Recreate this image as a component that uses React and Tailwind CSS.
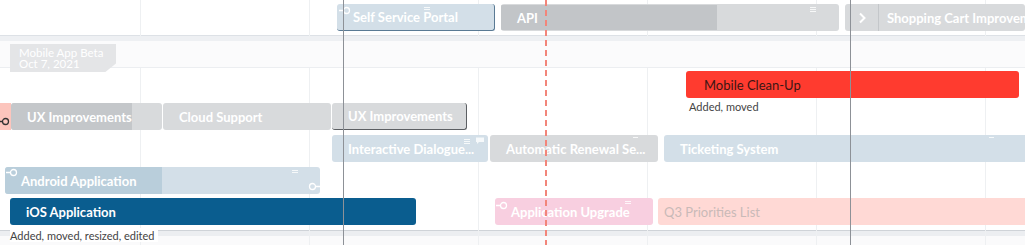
import React from "react";

const font = { fontFamily: "Lato, 'Open Sans', sans-serif" };

function Connector({ className = "", flip = false }) {
  return (
    <svg
      width="12"
      height="9"
      viewBox="0 0 12 9"
      className={`absolute ${className}`}
      style={flip ? { transform: "scaleX(-1)" } : undefined}
    >
      <line x1="0" y1="4.5" x2="4" y2="4.5" stroke="currentColor" strokeWidth="1.3" />
      <circle cx="7.5" cy="4.5" r="3" fill="none" stroke="currentColor" strokeWidth="1.3" />
    </svg>
  );
}

function Grip({ className = "", lines = 3 }) {
  return (
    <div className={`absolute flex flex-col gap-[1px] ${className}`}>
      {Array.from({ length: lines }).map((_, i) => (
        <span key={i} className="block w-[6px] h-px bg-white/80" />
      ))}
    </div>
  );
}

function Bar({ className = "", children, textClass = "text-white font-bold", pad = "pl-4" }) {
  return (
    <div
      className={`relative shrink-0 h-[27px] rounded-[3px] flex items-center pt-[2px] overflow-hidden whitespace-nowrap text-[13px] ${pad} ${textClass} ${className}`}
    >
      {children}
    </div>
  );
}

function Row({ className = "", children }) {
  return <div className={`relative flex h-[27px] ${className}`}>{children}</div>;
}

export default function App() {
  const grid = [140, 309, 478, 647, 816, 985];
  return (
    <div className="relative w-[1025px] h-[245px] overflow-hidden bg-white" style={font}>
      {/* light grid */}
      {grid.map((x) => (
        <div key={x} className="absolute top-0 bottom-0 w-px bg-[#eef0f2]" style={{ left: x }} />
      ))}

      {/* top lane */}
      <div className="relative h-[35px] pt-[4px]">
        <Row className="pl-[337px] gap-[6px]">
          <Bar className="w-[158px] bg-[#d3dfe8] border-r border-b border-[#5a7a94]">
            <Connector className="left-[2px] top-[2px] text-white" />
            Self Service Portal
            <Grip lines={2} className="right-[64px] top-[3px]" />
          </Bar>
          <Bar pad="pl-0" className="w-[338px] bg-[#d8dadc]">
            <div className="h-full w-[216px] -mt-[2px] bg-[#c2c5c8] flex items-center pt-[2px] pl-4">API</div>
            <Grip className="right-[23px] top-[3px]" />
          </Bar>
          <Bar pad="pl-0" className="w-[180px] bg-[#d8dadc]">
            <div className="h-[27px] -mt-[2px] w-[34px] shrink-0 border-r border-[#c4c7ca] flex items-center justify-center">
              <svg width="8" height="12" viewBox="0 0 8 12">
                <path d="M2 1.5 L6.5 6 L2 10.5" fill="none" stroke="white" strokeWidth="2" />
              </svg>
            </div>
            <span className="pl-2">Shopping Cart Improvem</span>
          </Bar>
        </Row>
      </div>
      <div className="h-px bg-[#dde1e6]" />
      <div className="h-[5px] bg-[#eef0f3]" />

      {/* milestone lane */}
      <div className="relative z-10 h-[27px] bg-[#fbfbfc] border-b border-[#eceef1] pt-[3px] pl-[10px]">
        <div
          className="w-[106px] h-[28px] bg-[#e4e5e7] text-white text-[11.5px] leading-[11px] pl-[9px] pt-[3px]"
          style={{ clipPath: "polygon(0 0, 100% 0, 100% 70%, 90% 100%, 0 100%)" }}
        >
          <div>Mobile App Beta</div>
          <div>Oct 7, 2021</div>
        </div>
      </div>

      {/* main lane */}
      <div className="relative h-[162px] pt-[3px] flex flex-col gap-[5px]">
        <Row className="pl-[686px]">
          <Bar pad="pl-[18px]" textClass="text-[#3b1614] font-normal" className="w-[333px] bg-[#ff3b2f]">
            Mobile Clean-Up
          </Bar>
          <div className="absolute left-[689px] top-[29px] text-[11px] leading-[13px] text-[#444]">Added, moved</div>
        </Row>

        <Row>
          <div className="w-[11px] shrink-0 bg-[#fcc5bd]" />
          <Connector className="left-[-2px] top-[14px] text-[#333]" />
          <Bar pad="pl-0" className="w-[151px] bg-[#d8dadc]">
            <div className="h-[27px] -mt-[2px] w-[121px] bg-[#c4c7ca] flex items-center pt-[2px] pl-4">UX Improvements</div>
          </Bar>
          <Bar className="ml-px w-[168px] bg-[#d8dadc]">Cloud Support</Bar>
          <Bar className="ml-px w-[135px] bg-[#d8dadc] border-r border-b border-[#5c5f63]">UX Improvements</Bar>
        </Row>

        <Row className="pl-[332px]">
          <Bar className="w-[156px] bg-[#d3dfe8]">
            Interactive Dialogue...
            <Grip className="right-[18px] top-[4px]" />
            <svg width="10" height="9" viewBox="0 0 10 9" className="absolute right-[3px] top-[1px]">
              <path d="M1 1.5h8v4.5H4L2 8V6H1z" fill="white" fillOpacity="0.8" />
            </svg>
          </Bar>
          <Bar className="ml-[2px] w-[168px] bg-[#d8dadc]">
            Automatic Renewal Se...
            <span className="absolute right-[20px] top-[2px] w-[5px] h-px bg-white/80" />
          </Bar>
          <Bar className="ml-[6px] w-[370px] bg-[#d3dfe8]">
            Ticketing System
            <span className="absolute left-[325px] top-[2px] w-[5px] h-px bg-white/80" />
          </Bar>
        </Row>

        <Row className="pl-[5px]">
          <Bar pad="pl-0" className="w-[315px] bg-[#d3dfe8]">
            <div className="h-[27px] -mt-[2px] w-[157px] bg-[#b9cedb] flex items-center pt-[2px] pl-4">Android Application</div>
            <Connector className="left-[1px] top-[1px] text-white" />
            <Connector flip className="right-0 top-[15px] text-white" />
            <Grip lines={2} className="right-[22px] top-[3px]" />
          </Bar>
        </Row>

        <Row className="pl-[10px] -mt-px">
          <Bar className="w-[406px] bg-[#0a5d8f]">iOS Application</Bar>
          <Bar className="ml-[79px] w-[158px] bg-[#f8cfe0]">
            <Connector className="left-[1px] top-[3px] text-white" />
            Application Upgrade
            <Grip lines={2} className="right-[22px] top-[3px]" />
          </Bar>
          <Bar pad="pl-[6px]" textClass="text-[#c9bab8] font-normal" className="ml-[5px] w-[380px] bg-[#ffd9d5]">
            Q3 Priorities List
          </Bar>
        </Row>
      </div>

      <div className="h-px bg-[#cfd3d8]" />
      <div className="h-[5px] bg-[#eceef1]" />
      <div className="h-[10px] bg-[#fafafb]" />

      <div className="absolute left-[10px] top-[228px] bg-white pr-[3px] pt-[1px] text-[11px] leading-[13px] text-[#444] z-10">
        Added, moved, resized, edited
      </div>

      {/* current markers */}
      <div className="absolute top-0 bottom-0 left-[343px] w-px bg-[#8d9197] z-20" />
      <div className="absolute top-0 bottom-0 left-[850px] w-px bg-[#8d9197] z-20" />
      <div
        className="absolute top-0 bottom-0 left-[545px] w-[2px] z-20"
        style={{ backgroundImage: "repeating-linear-gradient(to bottom, #f2857a 0 6px, transparent 6px 10px)" }}
      />
    </div>
  );
}
